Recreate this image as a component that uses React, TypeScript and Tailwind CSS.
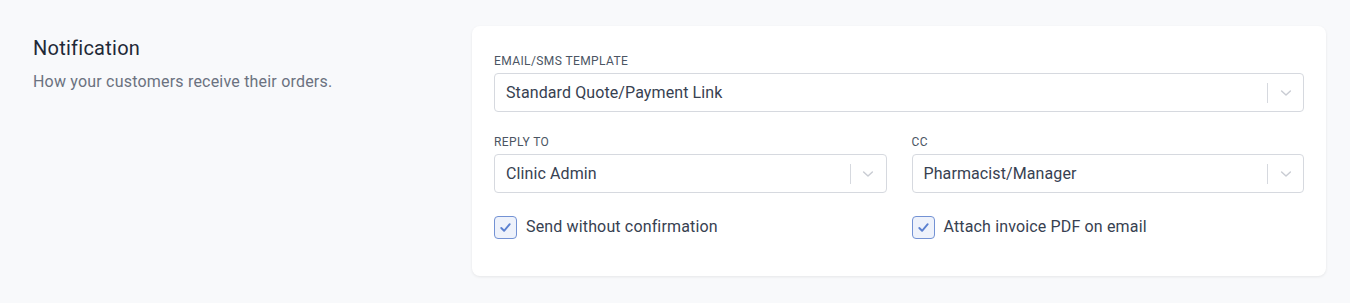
import React from "react";

function Chevron() {
  return (
    <svg width="16" height="16" viewBox="0 0 20 20" className="text-[#c9ccd3]">
      <path d="M4.5 7.5 L10 12.5 L15.5 7.5" fill="none" stroke="currentColor" strokeWidth="1.8" strokeLinecap="round" strokeLinejoin="round" />
    </svg>
  );
}

function Select({ value }: { value: string }) {
  return (
    <div className="flex h-[39px] items-center rounded-[4px] border border-[#d6d9df] bg-white">
      <div className="flex-1 pl-[11px] text-[16px] tracking-[0.1px] text-[#374151]">{value}</div>
      <div className="h-[20px] w-px bg-[#d6d9df]" />
      <div className="flex w-[35px] items-center justify-center">
        <Chevron />
      </div>
    </div>
  );
}

function Label({ children }: { children: React.ReactNode }) {
  return <div className="mb-[4px] text-[12px] leading-[16px] tracking-[0.4px] text-[#4b5563]">{children}</div>;
}

function Check({ label }: { label: string }) {
  return (
    <div className="flex items-center gap-[9px]">
      <div className="flex h-[23px] w-[23px] items-center justify-center rounded-[4px] border-[1.5px] border-[#7392d4] bg-[#eef2fb]">
        <svg width="15" height="15" viewBox="0 0 16 16">
          <path d="M3.5 8.5 L6.5 11.5 L12.5 4.5" fill="none" stroke="#5b80d0" strokeWidth="2" strokeLinecap="round" strokeLinejoin="round" />
        </svg>
      </div>
      <span className="text-[16px] tracking-[0.15px] text-[#374151]">{label}</span>
    </div>
  );
}

export default function App() {
  return (
    <div className="min-h-[303px] w-[1350px] bg-[#f8f9fb] font-['Roboto',sans-serif]">
      <div className="flex items-start pt-[26px] pl-[33px] pr-[24px]">
        <div className="w-[439px] pt-[8px]">
          <div className="text-[20px] leading-[28px] tracking-[0.25px] text-[#1f2937]">Notification</div>
          <div className="mt-[8px] text-[16px] leading-[24px] tracking-[0.2px] text-[#6b7280]">How your customers receive their orders.</div>
        </div>
        <div className="flex-1 rounded-[8px] bg-white px-[22px] pt-[27px] pb-[37px] shadow-[0_1px_3px_rgba(0,0,0,0.08)]">
          <Label>EMAIL/SMS TEMPLATE</Label>
          <Select value="Standard Quote/Payment Link" />
          <div className="mt-[22px] grid grid-cols-2 gap-x-[25px]">
            <div>
              <Label>REPLY TO</Label>
              <Select value="Clinic Admin" />
            </div>
            <div>
              <Label>CC</Label>
              <Select value="Pharmacist/Manager" />
            </div>
            <div className="mt-[22px]">
              <Check label="Send without confirmation" />
            </div>
            <div className="mt-[22px]">
              <Check label="Attach invoice PDF on email" />
            </div>
          </div>
        </div>
      </div>
    </div>
  );
}
